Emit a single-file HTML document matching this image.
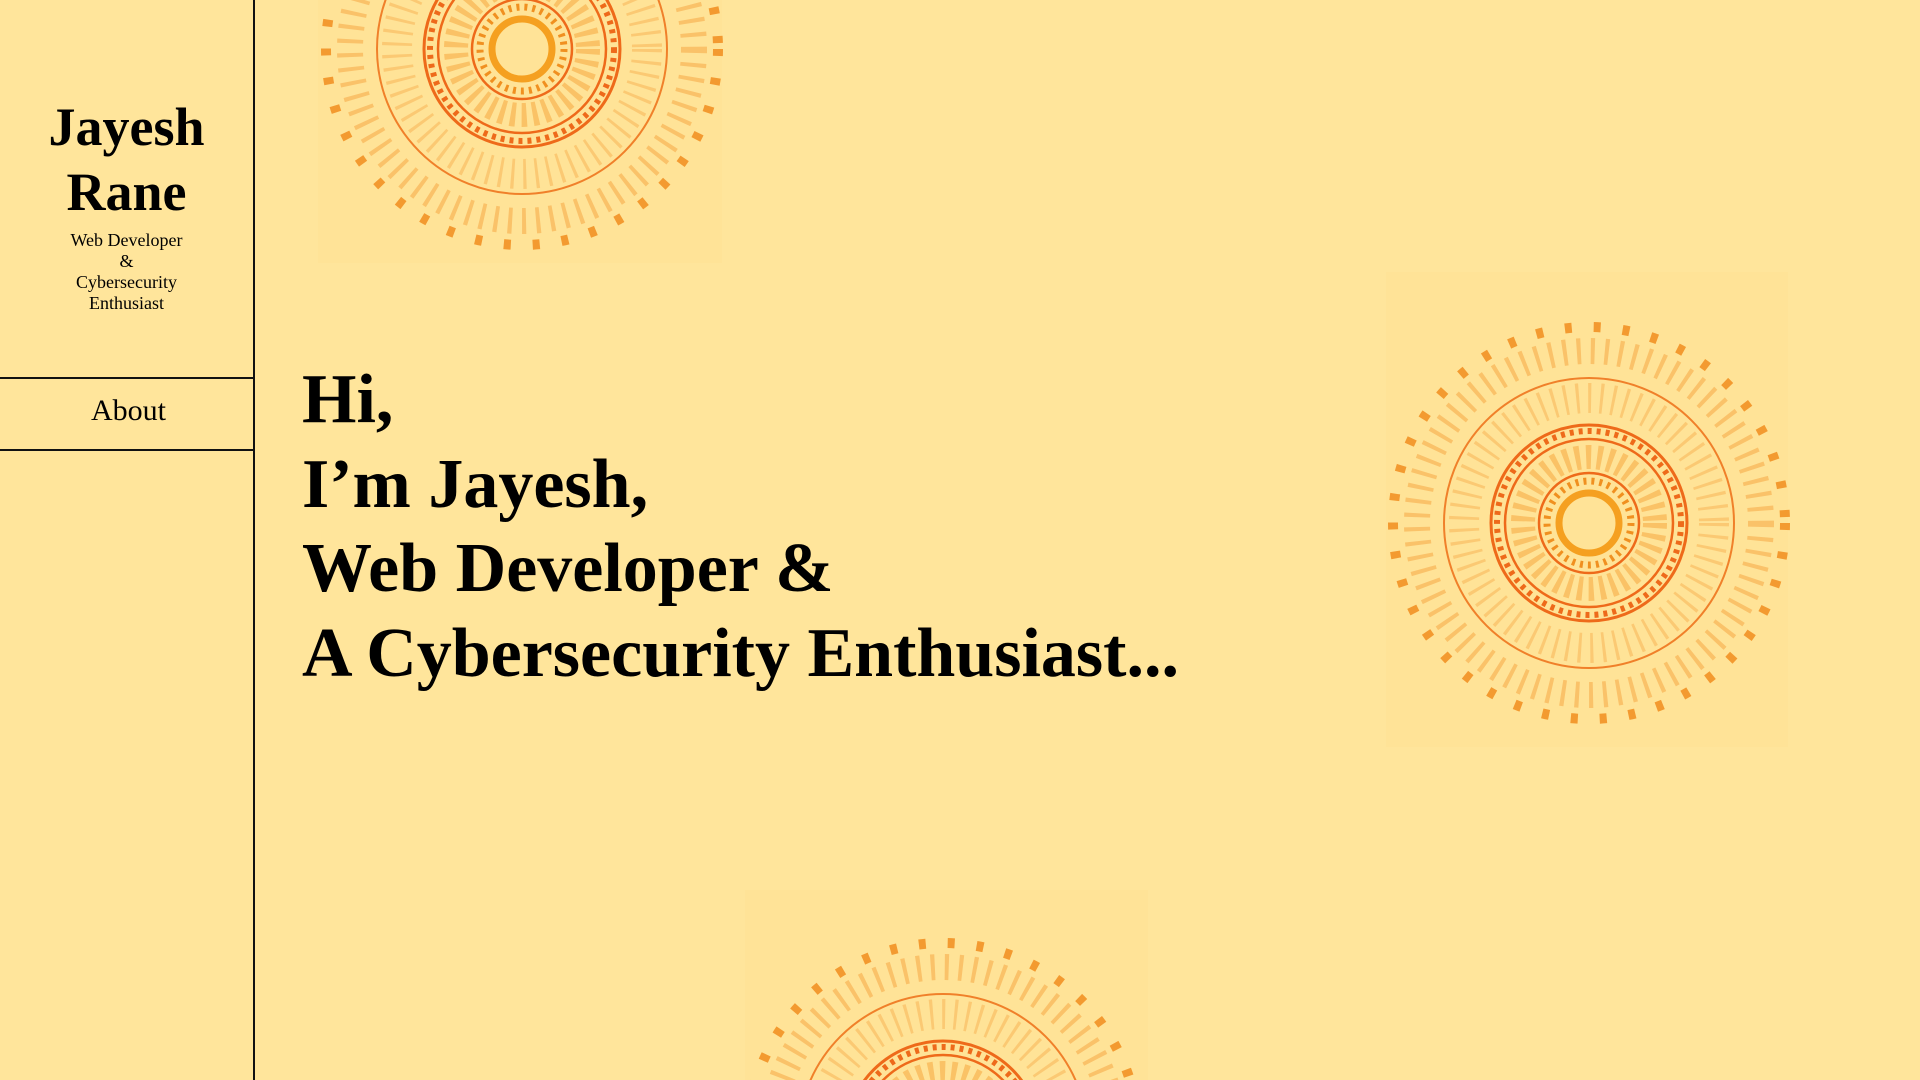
<!DOCTYPE html>
<html><head><meta charset="utf-8"><style>
html,body{margin:0;padding:0;width:1920px;height:1080px;overflow:hidden;background:#FFE59B;font-family:"Liberation Serif",serif;color:#000}
.side{position:absolute;left:0;top:0;width:253px;height:1080px;border-right:2px solid #111;}
.name{position:absolute;left:0;width:253px;text-align:center;font-weight:bold;font-size:54px;line-height:65px;top:95px}
.sub{position:absolute;left:0;width:253px;text-align:center;font-size:18px;line-height:21px;top:230px}
.l{position:absolute;left:0;width:254px;height:0;border-top:2px solid #111}
.about{position:absolute;left:2px;width:253px;text-align:center;font-size:30px;top:394px}
.main{position:absolute;left:302px;top:358px;font-weight:bold;font-size:70px;line-height:84.5px;white-space:nowrap}
.sq{position:absolute;background:#FFE397}
svg.m{position:absolute}
</style></head><body>
<svg width="0" height="0" style="position:absolute">
<defs>
<g id="md">
 <g fill="none" stroke="#F07A1A" stroke-width="2">
  <circle r="196" stroke-dasharray="7 22" stroke-width="10" stroke="#F39A30"/>
  <circle r="172" stroke="#F39A30" stroke-dasharray="4 10" stroke-width="26" opacity=".45"/>
  <circle r="145" stroke="#F0802A"/>
  <circle r="125" stroke="#F7B050" stroke-dasharray="3 9" stroke-width="30" opacity=".5"/>
  <circle r="98" stroke="#EE6A1A" stroke-width="3"/>
  <circle r="92" stroke="#EE6A1A" stroke-dasharray="4 5" stroke-width="6"/>
  <circle r="84" stroke="#EE6A1A" stroke-width="2.5"/>
  <circle r="66" stroke="#F49A2A" stroke-dasharray="5 6" stroke-width="24" opacity=".45"/>
  <circle r="50" stroke="#EE6A1A" stroke-width="2.5"/>
  <circle r="42" stroke="#F09020" stroke-dasharray="3 5" stroke-width="7"/>
  <circle r="30" stroke="#F5A020" stroke-width="7"/>
 </g>
</g>
</defs>
</svg>
<div class="side"></div>
<div class="name">Jayesh<br>Rane</div>
<div class="sub">Web Developer<br>&amp;<br>Cybersecurity<br>Enthusiast</div>
<div class="l" style="top:377px"></div>
<div class="l" style="top:449px"></div>
<div class="about">About</div>

<div class="sq" style="left:318px;top:0;width:404px;height:263px"></div>
<div class="sq" style="left:1386px;top:272px;width:402px;height:475px"></div>
<div class="sq" style="left:745px;top:890px;width:403px;height:190px"></div>

<svg class="m" style="left:0;top:0" width="1920" height="1080">
 <use href="#md" transform="translate(522,49)"/>
 <use href="#md" transform="translate(1589,523)"/>
 <use href="#md" transform="translate(943,1139)"/>
</svg>

<div class="main">Hi,<br>I’m Jayesh,<br>Web Developer &amp;<br>A Cybersecurity Enthusiast...</div>
</body></html>
